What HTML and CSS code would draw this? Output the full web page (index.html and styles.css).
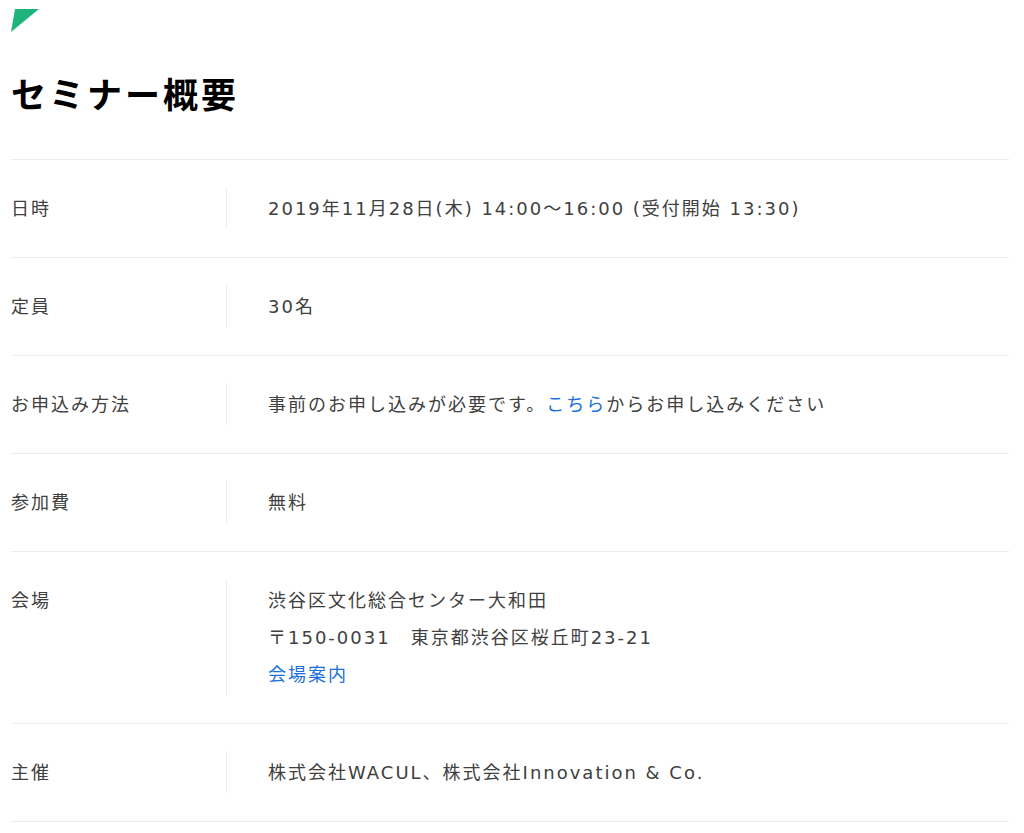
FILE: index.html
```html
<!DOCTYPE html>
<html lang="ja">
<head>
<meta charset="utf-8">
<link rel="stylesheet" href="styles.css">
</head>
<body>
<main class="page">
  <svg class="mark" width="28" height="24" viewBox="0 0 28 24"><polygon points="4,0 28,0 0,23" fill="#1fb57a"/></svg>
  <h1 class="title">セミナー概要</h1>
  <dl class="table">
    <div class="row">
      <dt class="label">日時</dt>
      <dd class="value"><p>2019年11月28日(木) 14:00〜16:00 (受付開始 13:30)</p></dd>
    </div>
    <div class="row">
      <dt class="label">定員</dt>
      <dd class="value"><p>30名</p></dd>
    </div>
    <div class="row">
      <dt class="label">お申込み方法</dt>
      <dd class="value"><p>事前のお申し込みが必要です。<a href="#" class="link">こちら</a>からお申し込みください</p></dd>
    </div>
    <div class="row">
      <dt class="label">参加費</dt>
      <dd class="value"><p>無料</p></dd>
    </div>
    <div class="row">
      <dt class="label">会場</dt>
      <dd class="value"><p>渋谷区文化総合センター大和田</p><p>〒150-0031　東京都渋谷区桜丘町23-21</p><p><a href="#" class="link">会場案内</a></p></dd>
    </div>
    <div class="row">
      <dt class="label">主催</dt>
      <dd class="value"><p>株式会社WACUL、株式会社Innovation &amp; Co.</p></dd>
    </div>
  </dl>
</main>
</body>
</html>
```
FILE: styles.css
```css
html, body {
  margin: 0;
  padding: 0;
  background: #fff;
}
.page {
  margin: 0 15px 0 11px;
  padding-top: 9px;
  font-family: "DejaVu Sans", "Noto Sans CJK JP", sans-serif;
  color: #404040;
}
.mark {
  display: block;
}
.title {
  margin: 33px 0 0;
  font-family: "Noto Sans CJK JP", sans-serif;
  font-size: 35px;
  font-weight: bold;
  line-height: 54px;
  letter-spacing: 3px;
  color: #000;
  padding-bottom: 39px;
}
.table {
  margin: 0;
  border-bottom: 1px solid #ebebeb;
}
.row {
  display: flex;
  border-top: 1px solid #ebebeb;
  padding: 27px 0 28px;
}
.label {
  margin: 0;
  width: 215px;
  flex: none;
  border-right: 1px solid #ebebeb;
  padding: 3px 0 2px;
  font-size: 18px;
  line-height: 37px;
  letter-spacing: 2px;
}
.value {
  margin: 0;
  padding: 3px 0 2px 41px;
  font-size: 18px;
  line-height: 37px;
  letter-spacing: 2px;
}
.value p {
  margin: 0;
}
.link {
  color: #1a70e0;
  text-decoration: none;
}
```
